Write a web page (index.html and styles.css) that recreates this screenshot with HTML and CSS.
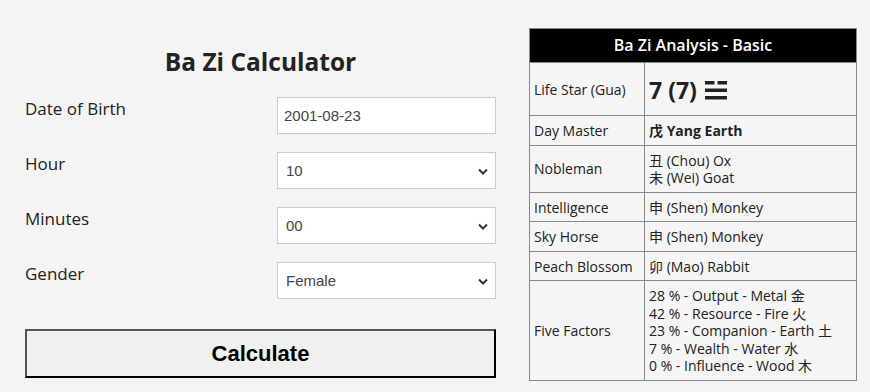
FILE: index.html
```html
<!DOCTYPE html>
<html>
<head>
<meta charset="utf-8">
<link rel="stylesheet" href="styles.css">
</head>
<body>
<div class="page">
  <div class="calc">
    <h1 class="title">Ba Zi Calculator</h1>
    <div class="row">
      <label class="lbl">Date of Birth</label>
      <div class="field"><span class="val">2001-08-23</span></div>
    </div>
    <div class="row">
      <label class="lbl">Hour</label>
      <div class="field sel"><span class="val">10</span><svg class="chev" width="10" height="7" viewBox="0 0 10 7"><path d="M1 1.5 L5 5.5 L9 1.5" fill="none" stroke="#333" stroke-width="2"/></svg></div>
    </div>
    <div class="row">
      <label class="lbl">Minutes</label>
      <div class="field sel"><span class="val">00</span><svg class="chev" width="10" height="7" viewBox="0 0 10 7"><path d="M1 1.5 L5 5.5 L9 1.5" fill="none" stroke="#333" stroke-width="2"/></svg></div>
    </div>
    <div class="row">
      <label class="lbl">Gender</label>
      <div class="field sel"><span class="val">Female</span><svg class="chev" width="10" height="7" viewBox="0 0 10 7"><path d="M1 1.5 L5 5.5 L9 1.5" fill="none" stroke="#333" stroke-width="2"/></svg></div>
    </div>
    <div class="btn">Calculate</div>
  </div>
  <table class="analysis">
    <tr><th colspan="2">Ba Zi Analysis - Basic</th></tr>
    <tr class="big"><td class="k">Life Star (Gua)</td><td class="gua">7 (7) <svg class="tri" width="22" height="19" viewBox="0 0 22 19"><rect x="0" y="0" width="9.5" height="3.5" fill="#222"/><rect x="12.5" y="0" width="9.5" height="3.5" fill="#222"/><rect x="0" y="7.5" width="22" height="3.5" fill="#222"/><rect x="0" y="15" width="22" height="3.5" fill="#222"/></svg></td></tr>
    <tr><td class="k">Day Master</td><td class="b">戊 Yang Earth</td></tr>
    <tr><td class="k">Nobleman</td><td>丑 (Chou) Ox<br>未 (Wei) Goat</td></tr>
    <tr><td class="k">Intelligence</td><td>申 (Shen) Monkey</td></tr>
    <tr><td class="k">Sky Horse</td><td>申 (Shen) Monkey</td></tr>
    <tr><td class="k">Peach Blossom</td><td>卯 (Mao) Rabbit</td></tr>
    <tr><td class="k">Five Factors</td><td>28 % - Output - Metal 金<br>42 % - Resource - Fire 火<br>23 % - Companion - Earth 土<br>7 % - Wealth - Water 水<br>0 % - Influence - Wood 木</td></tr>
  </table>
</div>
</body>
</html>
```
FILE: styles.css
```css
* { box-sizing: border-box; }
html, body { margin: 0; padding: 0; background: #f4f4f4; }
body {
  font-family: "Open Sans", "Noto Sans CJK SC", sans-serif;
  color: #222;
  width: 870px;
  height: 392px;
  overflow: hidden;
}
.page {
  display: flex;
  align-items: flex-start;
  padding: 28px 0 0 25px;
  gap: 33px;
}
.calc {
  width: 471px;
  display: flex;
  flex-direction: column;
}
.title {
  margin: 18px 0 19px;
  text-align: center;
  font-size: 24.5px;
  font-weight: 700;
  line-height: 32px;
  color: #222;
}
.row {
  display: flex;
  justify-content: space-between;
  align-items: flex-start;
  margin-bottom: 18px;
  height: 37px;
}
.lbl {
  font-size: 17px;
  line-height: 22px;
  padding-top: 1px;
  color: #222;
}
.field {
  width: 219px;
  height: 37px;
  border: 1px solid #ccc;
  background: #fff;
  display: flex;
  align-items: center;
  justify-content: space-between;
  padding: 0 7px 0 6px;
  font-family: "Liberation Sans", Arial, sans-serif;
  font-size: 15px;
  color: #444;
}
.sel .val { padding-left: 2px; }
.chev { margin-top: 1px; }
.btn {
  margin-top: 12px;
  height: 49px;
  border: 2px solid;
  border-color: #555 #000 #000 #555;
  background: #f0f0f0;
  display: flex;
  align-items: center;
  justify-content: center;
  font-family: "Liberation Sans", Arial, sans-serif;
  font-weight: 700;
  font-size: 22px;
  color: #000;
}
.analysis {
  width: 328px;
  border-collapse: collapse;
  border: 1px solid #888;
  font-size: 14px;
  line-height: 17.5px;
  color: #222;
}
.analysis th {
  background: #000;
  color: #fff;
  font-size: 16px;
  font-weight: 600;
  height: 34px;
  padding: 0;
  border: 1px solid #888;
}
.analysis td {
  border: 1px solid #888;
  padding: 6px 4px 5px;
  vertical-align: middle;
  background: #f5f5f5;
}
.analysis td.k { width: 115px; }
.analysis td.b { font-weight: 700; }
.analysis tr.big td { height: 53px; }
.gua {
  font-size: 23px;
  font-weight: 700;
  line-height: 26px;
}
.tri {
  vertical-align: -1px;
  margin-left: 2px;
}
```
